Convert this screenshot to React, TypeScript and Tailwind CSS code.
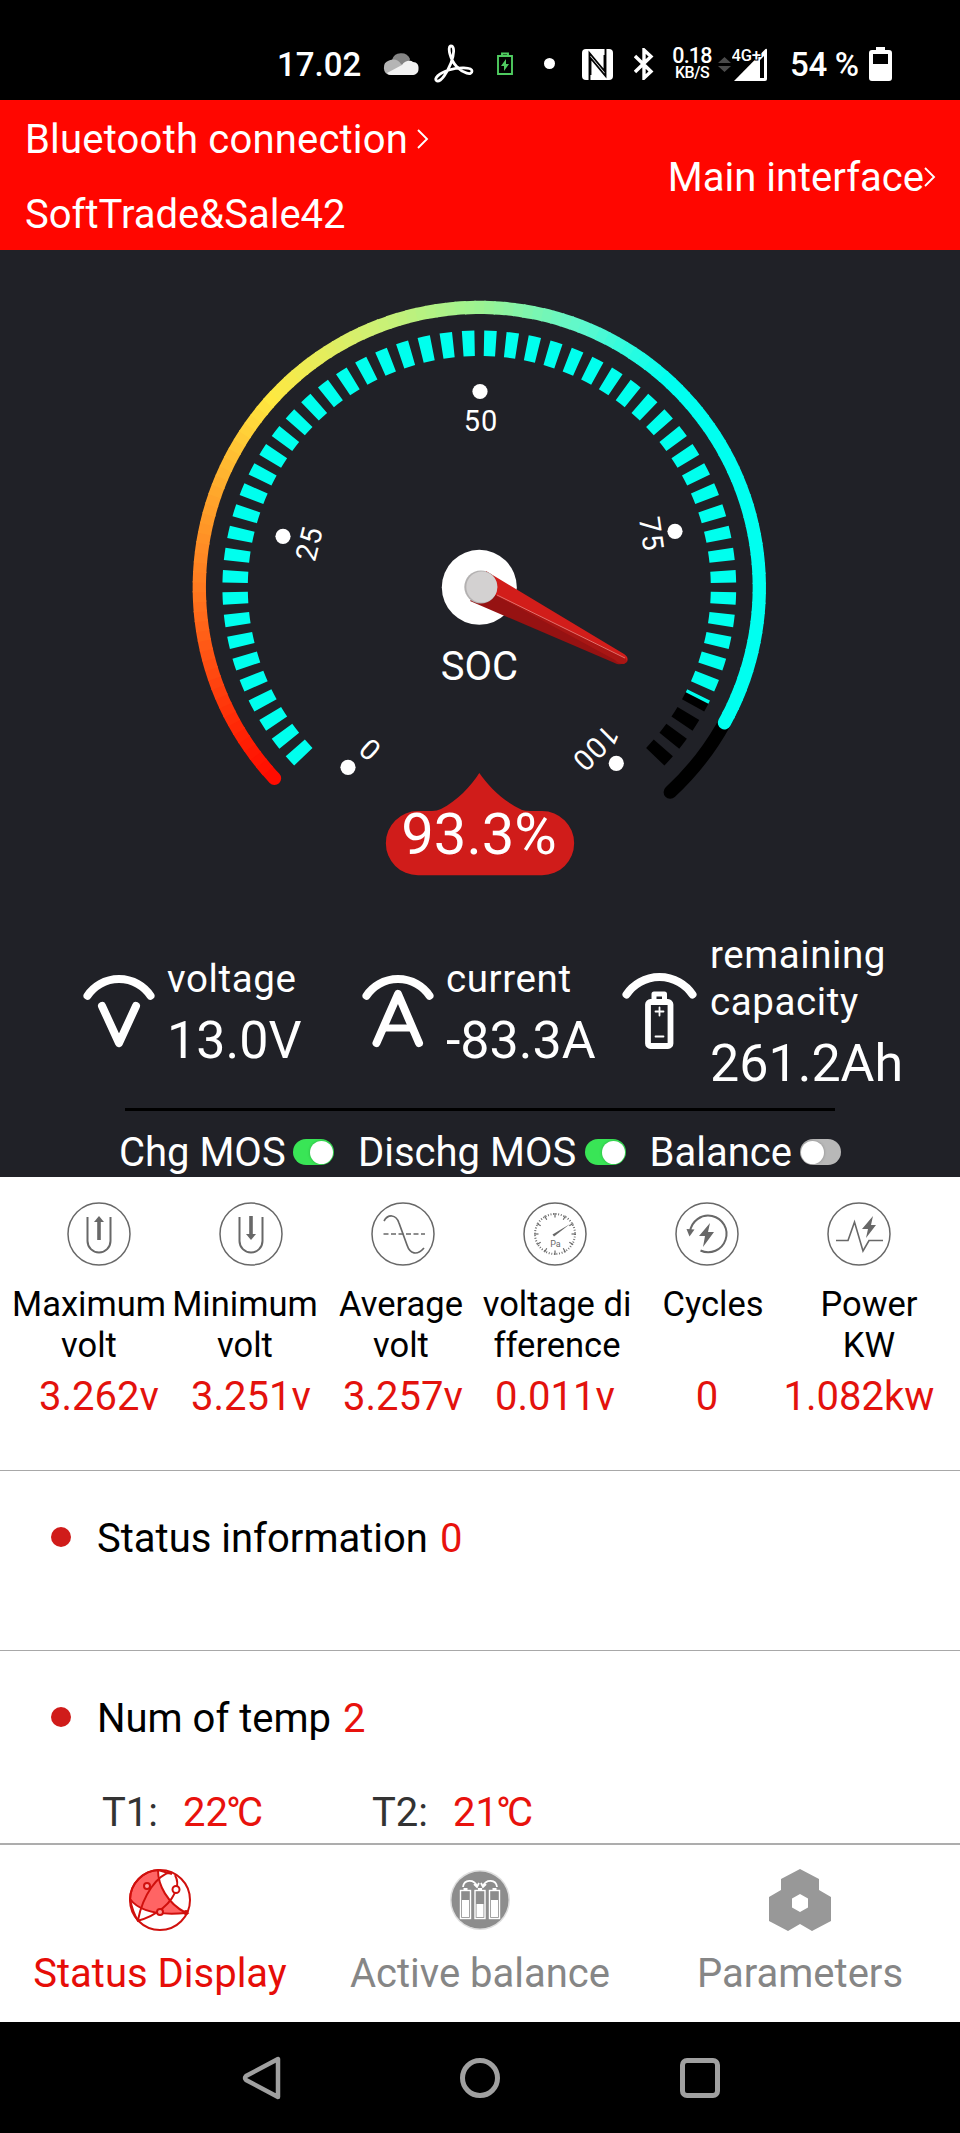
import React from "react";

const CX = 479.3;
const CY = 587.4;

const polar = (r: number, deg: number) => {
    const a = (deg * Math.PI) / 180;
    return [CX + r * Math.cos(a), CY + r * Math.sin(a)];
};

const arc = (r: number, from: number, to: number) => {
    const [x1, y1] = polar(r, from);
    const [x2, y2] = polar(r, to);
    return `M${x1} ${y1}A${r} ${r} 0 ${to - from > 180 ? 1 : 0} 1 ${x2} ${y2}`;
};

// colour stops along the outer ring, by angle
const STOPS: [number, number[]][] = [
    [137, [255, 10, 0]],
    [148, [255, 34, 4]],
    [180, [255, 122, 32]],
    [200, [255, 168, 44]],
    [222, [255, 232, 64]],
    [246, [210, 240, 112]],
    [270, [156, 243, 146]],
    [292, [92, 248, 206]],
    [312, [0, 255, 240]],
    [400, [0, 255, 240]],
];

const ringColor = (deg: number) => {
    const i = Math.max(1, STOPS.findIndex(([d]) => d >= deg));
    const [d0, c0] = STOPS[i - 1];
    const [d1, c1] = STOPS[i];
    const t = (deg - d0) / (d1 - d0);
    return `rgb(${c0.map((c, k) => Math.round(c + (c1[k] - c) * t)).join(",")})`;
};

/* --- STATUS BAR --- */
const StatusBar = () => (
    <div className="flex h-[100px] items-start bg-black font-medium text-white">
        <span className="ml-[277px] mt-[45px] w-[86px] text-[33px] leading-10">17.02</span>
        <svg className="ml-5 mt-[52px]" width="36" height="24" viewBox="0 0 36 24">
            <path d="M9 8a9.500 9 0 0 1 18-1l-2 6-14 4z" fill="#858585" />
            <path d="M7 23A7.500 7.500 0 0 1 6 8.500C11 6 16 8 18 12l3 2-14 9z" fill="#b5b5b5" />
            <path d="M4 21l15-8c3-5 9-5 11-3 4 0 6 3 5.500 7 0 4-3 6-6.500 6H8q-3 0-4-2z" fill="#f2f2f2" />
        </svg>
        <svg className="ml-[15px] mt-[44px]" width="40" height="40" viewBox="0 0 40 40" fill="none" stroke="#fff" strokeWidth="2.800">
            <path d="M17 2c4 0 3 9 0 17C13 29 7 38 3 37c-4-2 2-8 12-11 9-3 23-3 23 1 0 5-9 2-15-4C16 16 13 2 17 2z" />
        </svg>
        <svg className="ml-[23px] mt-[52px]" width="16" height="24" viewBox="0 0 16 24">
            <path d="M1 4h14v18H1zM5 1.500h6V4H5z" fill="none" stroke="#4fcb60" strokeWidth="1.900" />
            <path d="M9 7l-5 7h3v5l5-7H9z" fill="#4fcb60" />
        </svg>
        <span className="ml-[31px] mt-[58px] size-[11px] rounded-full bg-white" />
        <svg className="ml-[27px] mt-[49px]" width="31" height="31" viewBox="0 0 31 31">
            <rect width="31" height="31" rx="4" fill="#fff" />
            <path d="M7.500 31V4l15 18V6M23.500 0v27L8.500 9v17" fill="none" stroke="#000" strokeWidth="1.900" />
        </svg>
        <svg className="ml-[21px] mt-[48px]" width="20" height="32" viewBox="0 0 20 32" fill="none" stroke="#fff" strokeWidth="3.400">
            <path d="M1 8l16 15.500-7 6.500V2l7 6.500L1 24" />
        </svg>
        <div className="ml-[17px] mt-[47px] w-[42px] text-center">
            <div className="text-[21.500px] leading-[18px] tracking-[-0.800px]">0.18</div>
            <div className="text-[16px] leading-[15px] tracking-[-0.500px]">KB/S</div>
        </div>
        <svg className="ml-[5px] mt-[57px]" width="13" height="15" viewBox="0 0 13 15" fill="#4b4b4b">
            <path d="M0 6l6.500-6L13 6zM0 9l6.500 6L13 9z" />
        </svg>
        <svg className="ml-px mt-[46px]" width="36" height="36" viewBox="0 0 36 36">
            <path d="M2 35L33.500 3q1.500-1 1.500 1v29q0 2-2 2z" fill="#fff" />
            <path d="M28 14l4-4v22h-4z" fill="#000" />
            <text x="-0.500" y="14.500" fontSize="16.500" letterSpacing="-0.200" fill="#fff" stroke="#000" strokeWidth="2" paintOrder="stroke">4G+</text>
        </svg>
        <span className="ml-[22px] mt-[45px] w-[70px] whitespace-nowrap text-[33px] leading-10 tracking-[-0.300px]">54 %</span>
        <svg className="ml-[9px] mt-[47px]" width="23" height="34" viewBox="0 0 23 34">
            <path d="M7 0h9v3h4q3 0 3 3v25q0 3-3 3H3q-3 0-3-3V6q0-3 3-3h4z" fill="#fff" />
            <path d="M4 7h15v10H4z" fill="#000" />
        </svg>
    </div>
);

/* --- HEADER --- */
const Chevron = ({ className }: { className: string }) => (
    <svg className={className} width="12" height="20" viewBox="0 0 12 20" fill="none" stroke="#fff" strokeWidth="1.900">
        <path d="M1 1l9 9-9 9" />
    </svg>
);

const Header = () => (
    <div className="flex h-[150px] justify-between bg-[#ff0600] text-[40px] leading-[60px] text-white">
        <div className="flex flex-col gap-[15px] pl-[25px] pt-[10px]">
            <div className="flex items-center tracking-[0.200px]">
                <span>Bluetooth connection</span>
                <Chevron className="mb-[3px] ml-[9px]" />
            </div>
            <div>SoftTrade&amp;Sale42</div>
        </div>
        <div className="mt-[48px] flex h-[60px] items-center pr-[24px]">
            <span>Main interface</span>
            <Chevron className="mb-[3px]" />
        </div>
    </div>
);

/* --- SOC GAUGE --- */
const MARKS = [
    { label: "0", dot: [348, 767.3], text: [370, 750], rotate: 42 },
    { label: "25", dot: [283, 536.3], text: [309.3, 543.5], rotate: -76 },
    { label: "50", dot: [480, 391.5], text: [481, 421], rotate: 0 },
    { label: "75", dot: [675, 531.3], text: [651.3, 534], rotate: 82 },
    { label: "100", dot: [616.3, 763.3], text: [595.7, 748], rotate: 135 },
];

const Gauge = ({ soc }: { soc: number }) => {
    const sweep = (270 * soc) / 100;
    const end = 137 + sweep;
    const segments: number[] = [];
    for (let d = 137; d < end; d += 2) segments.push(d);
    const ticks = Array.from({ length: 54 }, (_, i) => 136.1 + i * 5);
    const tickEnd = 135 + sweep;

    return (
        <svg className="block" width="960" height="681" viewBox="0 250 960 681" fill="none">
            <path d={arc(280, 380, 407)} stroke="#000" strokeWidth="13.300" strokeLinecap="round" />
            {segments.map((d) => (
                <path
                    key={d}
                    d={arc(280, d, Math.min(d + 2.3, end))}
                    stroke={ringColor(d + 1)}
                    strokeWidth="13.300"
                    strokeLinecap={d === 137 || d + 2 >= end ? "round" : "butt"}
                />
            ))}
            {ticks.map((d) => (
                <React.Fragment key={d}>
                    {d + 2.8 > tickEnd && <path d={arc(244.2, d, d + 2.8)} stroke="#000" strokeWidth="25.400" />}
                    {d < tickEnd && <path d={arc(244.2, d, Math.min(d + 2.8, tickEnd))} stroke="#00ffee" strokeWidth="25.400" />}
                </React.Fragment>
            ))}
            {MARKS.map((m) => (
                <g key={m.label} fill="#fff">
                    <circle cx={m.dot[0]} cy={m.dot[1]} r="7.600" />
                    <text
                        transform={`translate(${m.text[0]} ${m.text[1]}) rotate(${m.rotate})`}
                        y="10"
                        fontSize="29"
                        letterSpacing="1"
                        textAnchor="middle"
                    >
                        {m.label}
                    </text>
                </g>
            ))}

            {/* needle */}
            <circle cx="479.300" cy="587.300" r="37.500" fill="#fff" />
            <path d="M486 571L624 654q5 3 3 8L481 591z" fill="#d21d1a" />
            <path d="M470 601L617 664q7 1 10-3L481 588z" fill="#961212" />
            <path d="M490 592L624 657q3 2 3 5l-3 2q-6 0-9-4z" fill="#a81614" />
            <path d="M497 595l128 63" stroke="#e2706c" strokeWidth="1" />
            <circle cx="480.800" cy="587" r="16.500" fill="#b3b1b1" />
            <circle cx="481.800" cy="587" r="15.500" fill="#d3d1d1" />
            <text x="479.500" y="679.500" fontSize="40" fill="#fff" textAnchor="middle">SOC</text>

            <path
                d="M479.300 773C489 787 503 801 522 810q3 1 8 1h12a32 32 0 0 1 0 64.300H418A32 32 0 0 1 418 811h14q5 0 9-2C457 801 471 786 479.300 773z"
                fill="#d01c1a"
            />
            <text x="479" y="853.500" fontSize="58" fill="#fff" textAnchor="middle">{soc}%</text>
        </svg>
    );
};

/* --- MAIN METRICS --- */
const MetricIcon = ({ kind }: { kind: "V" | "A" | "B" }) => (
    <svg width="76" height="88" viewBox="0 0 76 88" fill="none" stroke="#fff" strokeWidth="8" strokeLinecap="round" strokeLinejoin="round">
        <path d={kind === "B" ? "M4.500 21.500A40 40 0 0 1 70.500 21.500" : "M4.500 22.700A38 38 0 0 1 67.500 22.700"} />
        {kind === "V" && <path d="M19 33l17 37 17-37" />}
        {kind === "A" && (
            <>
                <path d="M14.500 70L36 21l21 49" />
                <path d="M22 55h28" strokeWidth="7" />
            </>
        )}
        {kind === "B" && (
            <>
                <rect x="26" y="29" width="22.500" height="44" rx="2.500" strokeWidth="5.800" />
                <path d="M32 26v-5h10.500v5" strokeWidth="5" />
                <path d="M33.500 38.500h8M37.500 34.500v8M33.500 63.500h8" strokeWidth="1.800" />
            </>
        )}
    </svg>
);

const Metric = ({ kind, label, value, className }: { kind: "V" | "A" | "B"; label: string; value: string; className: string }) => (
    <div className={`flex items-center text-white ${className}`}>
        <MetricIcon kind={kind} />
        <div className={kind === "B" ? "ml-[12px]" : "ml-[8px]"}>
            <div className="whitespace-pre-line text-[38.500px] leading-[47px] tracking-[0.600px]">{label}</div>
            <div className="text-[52px] leading-[77px]">{value}</div>
        </div>
    </div>
);

const Toggle = ({ on }: { on: boolean }) => (
    <span className={`-mt-[2px] flex h-[26px] w-[41px] items-center rounded-full ${on ? "justify-end bg-[#39e556]" : "justify-start bg-[#b8b8b8]"}`}>
        <span className="mx-[1px] size-[23px] rounded-full bg-white shadow-[0_0_3px_rgba(0,0,0,0.25)]" />
    </span>
);

const Switches = () => (
    <div className="flex h-[67px] items-start pl-[119px] text-[40px] leading-[48px] text-white">
        {[
            { label: "Chg MOS", on: true, box: "w-[239px]", text: "w-[173.500px]" },
            { label: "Dischg MOS", on: true, box: "w-[291.500px]", text: "w-[226.500px]" },
            { label: "Balance", on: false, box: "w-[200px]", text: "w-[150px]" },
        ].map((s) => (
            <div key={s.label} className={`flex items-center pt-[18px] ${s.box}`}>
                <span className={`whitespace-nowrap ${s.text}`}>{s.label}</span>
                <Toggle on={s.on} />
            </div>
        ))}
    </div>
);

/* --- CELL STATS --- */
const StatIcon = ({ name }: { name: string }) => (
    <svg width="64" height="64" viewBox="0 0 64 64" fill="none" stroke="#686868" strokeWidth="2">
        <circle cx="32" cy="32" r="31" strokeWidth="1.500" />
        {name === "max" && (
            <>
                <path d="M20.500 15v24a11.500 11.500 0 0 0 23 0V15" />
                <path d="M32 38V17" strokeWidth="3.600" />
                <path d="M27 20l5-6 5 6z" fill="#686868" stroke="none" />
            </>
        )}
        {name === "min" && (
            <>
                <path d="M20.500 15v24a11.500 11.500 0 0 0 23 0V15" />
                <path d="M32 14v21" strokeWidth="3.600" />
                <path d="M27 32l5 6 5-6z" fill="#686868" stroke="none" />
            </>
        )}
        {name === "avg" && (
            <>
                <path d="M13 19c4-7 12-7 15 2l8 22c3 9 10 11 17 3" strokeWidth="1.700" />
                <path d="M12.500 32H54" strokeWidth="1.500" strokeDasharray="5 2.500" />
            </>
        )}
        {name === "diff" && (
            <>
                <circle cx="32" cy="32" r="20" strokeWidth="2" strokeDasharray="0.900 1.720" />
                {Array.from({ length: 12 }, (_, i) => (
                    <path key={i} d="M32 11v4.500" strokeWidth="1.200" transform={`rotate(${i * 30} 32 32)`} />
                ))}
                <path d="M31 34.500l-1.500-2L47 22z" fill="#686868" stroke="none" />
                <text x="32.500" y="45" fontSize="9" fill="#686868" stroke="none" textAnchor="middle">Pa</text>
            </>
        )}
        {name === "cycles" && (
            <>
                <path d="M15 30a18.300 18.300 0 1 1 10.500 18.500" />
                <path d="M11.500 27l8 .500-5 7z" fill="#686868" stroke="none" />
                <path d="M35 21L24 34h6l-2 11 11-15h-6z" fill="#686868" stroke="none" />
            </>
        )}
        {name === "power" && (
            <>
                <path d="M9 38.500h12L27.500 20l8.500 29 6-10.500h14" strokeWidth="1.600" />
                <path d="M46 14L35 27h6l-2 9 10-13h-5z" fill="#686868" stroke="none" />
            </>
        )}
    </svg>
);

const STATS = [
    { icon: "max", label: "Maximum\nvolt", value: "3.262v" },
    { icon: "min", label: "Minimum\nvolt", value: "3.251v" },
    { icon: "avg", label: "Average\nvolt", value: "3.257v" },
    { icon: "diff", label: "voltage di\nfference", value: "0.011v" },
    { icon: "cycles", label: "Cycles", value: "0" },
    { icon: "power", label: "Power\nKW", value: "1.082kw" },
];

const Stats = () => (
    <div className="h-[293px] pt-[25px] text-center">
        <div className="grid grid-cols-6 pl-[23px] pr-[25px]">
            {STATS.map((s) => (
                <div key={s.icon} className="flex justify-center">
                    <StatIcon name={s.icon} />
                </div>
            ))}
        </div>
        <div className="mt-[18px] grid h-[82px] grid-cols-6 pl-[11px] pr-[13px] text-[34.500px] leading-[41px] text-black">
            {STATS.map((s) => (
                <div key={s.icon} className="whitespace-pre">{s.label}</div>
            ))}
        </div>
        <div className="mt-[7px] grid grid-cols-6 pl-[23px] pr-[25px] text-[40px] leading-[48px] text-[#e3120d]">
            {STATS.map((s) => (
                <div key={s.icon}>{s.value}</div>
            ))}
        </div>
    </div>
);

/* --- INFO SECTIONS --- */
const InfoTitle = ({ label, value }: { label: string; value: number }) => (
    <div className="flex items-center pl-[51px] text-[40px] leading-[48px] text-black">
        <span className="mb-[4px] mr-[26px] size-5 rounded-full bg-[#d01c1a]" />
        {label}
        <span className="ml-[12px] text-[#e8120d]">{value}</span>
    </div>
);

const Temp = ({ label, value }: { label: string; value: number }) => (
    <div className="flex w-[270px] text-[40px] leading-[48px]">
        <span className="w-[81px] text-[#333]">{label}:</span>
        <span className="text-[#e8120d]">
            {value}
            <span className="-ml-[2px] tracking-[-4px]">°C</span>
        </span>
    </div>
);

/* --- TAB BAR --- */
const StatusIcon = () => (
    <svg width="62" height="62" viewBox="0 0 62 62" fill="none" stroke="#d0100d" strokeWidth="2">
        <path d="M29 1C29 16 38 34 57 44C35 46 12 45 1 30A30 30 0 0 1 29 1z" fill="#ff6464" />
        <circle cx="31" cy="31" r="30" />
        <path d="M42 3C28 6 14 26 9 51M29 1l14 4M46 6c3 6 3 10 1 14C44 33 28 47 8 52M1 30c2 10 5 17 8 22" />
        <circle cx="18" cy="17" r="3" fill="#ff9c9c" />
        <circle cx="47" cy="20.500" r="3.500" fill="#fff" />
        <circle cx="31" cy="43" r="3" fill="#ff9c9c" />
        <circle cx="57" cy="43.500" r="1.500" fill="#d0100d" />
    </svg>
);

const BalanceIcon = () => (
    <svg width="62" height="62" viewBox="0 0 62 62">
        <circle cx="31" cy="31" r="30" fill="#dedede" />
        <circle cx="31" cy="31" r="28.500" fill="#8d8d8d" />
        {[11.5, 26, 40.5].map((x) => (
            <g key={x}>
                <path d={`M${x + 3} 19h4v3h-4z`} fill="#fff" />
                <rect x={x} y="21.500" width="10" height="28" fill="#8d8d8d" stroke="#fff" strokeWidth="1.400" />
                <rect x={x + 1.5} y={x === 26 ? 35 : 31} width="7" height={x === 26 ? 13 : 17} fill="#fff" />
            </g>
        ))}
        <path d="M14 18c1-8 11-8 14-1M34 17c3-7 13-7 14 1M25 15l3 3 2-4M32 14l2 4 3-3" fill="none" stroke="#fff" strokeWidth="1.800" />
    </svg>
);

const ParamsIcon = () => (
    <svg width="62" height="62" viewBox="0 0 62 62" fill="#989898">
        <path
            fillRule="evenodd"
            d="M31 0l19 10v11l12 7v24l-19 10-12-7-12 7L0 52V28l12-7V10zM31 25l-8 4.500v9L31 43l8-4.500v-9z"
        />
    </svg>
);

const TabBar = () => (
    <div className="grid h-[179px] grid-cols-3 border-t-2 border-[#adadad] pt-[24px] text-[40px] leading-[48px] text-[#868686]">
        <div className="flex flex-col items-center gap-[19px] text-[#e60d08]">
            <StatusIcon />
            Status Display
        </div>
        <div className="flex flex-col items-center gap-[19px]">
            <BalanceIcon />
            Active balance
        </div>
        <div className="flex flex-col items-center gap-[19px]">
            <ParamsIcon />
            Parameters
        </div>
    </div>
);

const SystemNav = () => (
    <div className="flex h-[111px] items-start bg-black pt-[34px]">
        <svg className="ml-[242px]" width="42" height="44" viewBox="0 0 42 44" fill="none" stroke="#a0a0a0" strokeWidth="4.500" strokeLinejoin="round">
            <path d="M36 3v38L4 24q-2-2 0-4z" />
        </svg>
        <span className="ml-[176px] mt-[2px] size-10 rounded-full border-[5px] border-[#a0a0a0]" />
        <span className="ml-[180px] mt-[2px] size-10 rounded-[7px] border-[5px] border-[#a0a0a0]" />
    </div>
);

export default function App() {
    return (
        <div className="w-[960px] overflow-hidden bg-white font-[Roboto,'Liberation_Sans',sans-serif]">
            <StatusBar />
            <Header />

            <section className="h-[927px] bg-[#202127]">
                <Gauge soc={93.3} />
                <div className="flex h-[171px] items-center">
                    <Metric kind="V" label="voltage" value="13.0V" className="ml-[83px] w-[279px]" />
                    <Metric kind="A" label="current" value="-83.3A" className="w-[260px]" />
                    <Metric kind="B" label={"remaining\ncapacity"} value="261.2Ah" className="" />
                </div>
                <div className="mx-[125px] mt-[6px] h-[3px] bg-black" />
                <Switches />
            </section>

            <Stats />

            <section className="h-[180px] border-t border-[#a8a8a8] pt-[44px]">
                <InfoTitle label="Status information" value={0} />
            </section>

            <section className="h-[193px] border-t border-[#a8a8a8] pt-[44px]">
                <InfoTitle label="Num of temp" value={2} />
                <div className="mt-[46px] flex pl-[102px]">
                    <Temp label="T1" value={22} />
                    <Temp label="T2" value={21} />
                </div>
            </section>

            <TabBar />
            <SystemNav />
        </div>
    );
}
